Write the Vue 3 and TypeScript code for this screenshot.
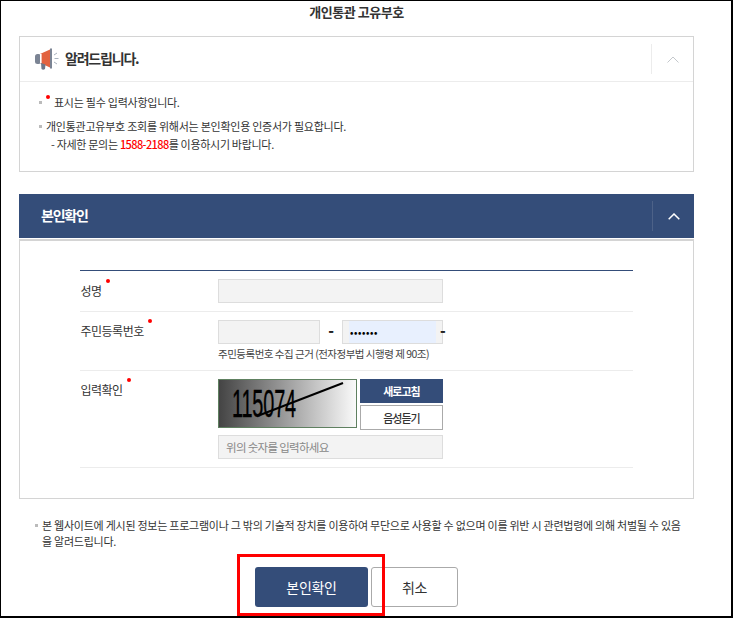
<script setup lang="ts">
const bullets = [
  { id: 1, text: '개인통관고유부호 조회를 위해서는 본인확인용 인증서가 필요합니다.' },
]
</script>

<template>
  <div class="page">
    <h1 class="page-title">개인통관 고유부호</h1>

    <section class="notice">
      <div class="notice-head">
        <div class="notice-title">
          <svg class="horn" viewBox="0 0 24 22" width="24" height="22">
            <rect x="0" y="6" width="6" height="10" rx="2.5" fill="#7b8494" />
            <path d="M5 6 L15 1.5 V19.5 L5 15 Z" fill="#e2623f" />
            <rect x="5" y="6" width="1.6" height="9" fill="#fff" />
            <path d="M15 0.5 L17 0.5 V20.5 L15 20.5 Z" fill="#7b8494" />
            <path d="M6 15 L10.5 16.5 L10 21 Q8 22.5 6.5 21 Z" fill="#6c7688" />
            <path d="M19 7 L22 5 M19.5 10.5 L23.5 10.5 M19 14 L22 16" stroke="#a9b2bd" stroke-width="1" fill="none" />
          </svg>
          <span>알려드립니다.</span>
        </div>
        <div class="toggle">
          <svg viewBox="0 0 12 7" width="12" height="7"><path d="M0.5 6.5 L6 1 L11.5 6.5" fill="none" stroke="#c4c8cc" stroke-width="1" /></svg>
        </div>
      </div>
      <div class="notice-body">
        <p class="bullet first"><i class="dot"></i><span class="after-dot">표시는 필수 입력사항입니다.</span></p>
        <p v-for="b in bullets" :key="b.id" class="bullet">{{ b.text }}</p>
        <p class="sub">- 자세한 문의는 <strong>1588-2188</strong>를 이용하시기 바랍니다.</p>
      </div>
    </section>

    <section class="verify">
      <div class="verify-head">
        <span class="verify-title">본인확인</span>
        <div class="toggle dark">
          <svg viewBox="0 0 12 7" width="12" height="7"><path d="M0.7 6.3 L6 1 L11.3 6.3" fill="none" stroke="#fff" stroke-width="1.5" /></svg>
        </div>
      </div>
      <div class="verify-body">
        <div class="form">
          <div class="row row-name">
            <label>성명<i class="dot"></i></label>
            <div class="field"><input class="input wide" type="text" /></div>
          </div>
          <div class="row row-rrn">
            <label>주민등록번호<i class="dot"></i></label>
            <div class="field">
              <div class="rrn">
                <input class="input part" type="text" />
                <b class="dash">-</b>
                <input class="input part secret" type="text" value="•••••••" />
                <b class="tail">-</b>
              </div>
              <p class="hint">주민등록번호 수집 근거 (전자정부법 시행령 제 90조)</p>
            </div>
          </div>
          <div class="row row-captcha">
            <label>입력확인<i class="dot"></i></label>
            <div class="field">
              <div class="captcha">
                <svg class="captcha-img" viewBox="0 0 137 47" width="139" height="49">
                  <defs>
                    <linearGradient id="cg" x1="0" x2="1" y1="0" y2="0">
                      <stop offset="0" stop-color="#444" />
                      <stop offset="1" stop-color="#fafafa" />
                    </linearGradient>
                  </defs>
                  <rect width="137" height="47" fill="url(#cg)" />
                  <text x="13" y="37" class="captcha-text" textLength="64" lengthAdjust="spacingAndGlyphs">115074</text>
                  <path d="M41 35 L124 3" stroke="#000" stroke-width="2" />
                </svg>
                <div class="captcha-btns">
                  <button class="btn-refresh" type="button">새로고침</button>
                  <button class="btn-audio" type="button">음성듣기</button>
                </div>
              </div>
              <input class="input wide code" type="text" placeholder="위의 숫자를 입력하세요" />
            </div>
          </div>
        </div>
      </div>
    </section>

    <p class="legal">본 웹사이트에 게시된 정보는 프로그램이나 그 밖의 기술적 장치를 이용하여 무단으로 사용할 수 없으며 이를 위반 시 관련법령에 의해 처벌될 수 있음<br />을 알려드립니다.</p>

    <div class="actions">
      <button class="btn primary" type="button">본인확인</button>
      <button class="btn ghost" type="button">취소</button>
      <div class="highlight"></div>
    </div>
  </div>
</template>

<style scoped>
.page {
  box-sizing: border-box;
  width: 733px;
  height: 618px;
  border: 1px solid #000;
  border-width: 1px 2px 2px 1px;
  padding: 0 37px 0 18px;
  overflow: hidden;
  font-family: "Noto Sans CJK KR", "Noto Sans", sans-serif;
  letter-spacing: -0.25px;
  color: #333;
  background: #fff;
}
.page-title {
  margin: 0;
  height: 35px;
  padding-top: 1px;
  box-sizing: border-box;
  font-size: 13px;
  line-height: 19px;
  font-weight: 700;
  letter-spacing: -0.45px;
  text-align: center;
  color: #333;
}
.notice {
  box-sizing: border-box;
  height: 136px;
  border: 1px solid #d4d4d4;
}
.notice-head {
  height: 45px;
  box-sizing: border-box;
  border-bottom: 1px solid #ececec;
  display: flex;
  justify-content: space-between;
  align-items: center;
}
.notice-title {
  display: flex;
  align-items: center;
  gap: 6px;
  padding-left: 15px;
  font-size: 14px;
  font-weight: 700;
  letter-spacing: -1.2px;
  color: #333;
}
.notice-title span { margin-top: -2px; }
.horn { display: block; }
.toggle {
  width: 41px;
  height: 30px;
  border-left: 1px solid #ececec;
  display: flex;
  align-items: center;
  justify-content: center;
}
.toggle.dark { border-left-color: #4d6288; }
.notice-body { padding: 11px 0 0 18px; font-size: 11px; line-height: 18px; }
.bullet {
  margin: 0;
  position: relative;
  padding-left: 8px;
}
.bullet::before {
  content: "";
  position: absolute;
  left: 1px;
  top: 8px;
  width: 3px;
  height: 3px;
  background: #bbb;
}
.bullet.first { padding-left: 6px; margin-bottom: 6px; }
.after-dot { margin-left: 4px; }
.sub { margin: 0; padding-left: 13px; letter-spacing: -0.3px; }
.sub strong { font-weight: 500; color: #f00; letter-spacing: -0.6px; }
.dot {
  display: inline-block;
  width: 4px;
  height: 4px;
  margin-left: 2px;
  border-radius: 50%;
  background: #f00;
  vertical-align: 8px;
}
.row label .dot {
  position: relative;
  top: -5px;
  margin-left: 4px;
}
.verify { margin-top: 22px; }
.verify-head {
  height: 44px;
  background: #344d79;
  color: #fff;
  display: flex;
  align-items: center;
  justify-content: space-between;
  padding-left: 22px;
  font-size: 14px;
  font-weight: 700;
  letter-spacing: -1.2px;
}
.verify-title { margin-top: -2px; }
.verify-body {
  box-sizing: border-box;
  margin-top: 1px;
  height: 260px;
  border: 1px solid #d4d4d4;
  border-top-width: 2px;
  padding: 29px 60px 0 60px;
}
.form { border-top: 1px solid #344d79; }
.row {
  display: flex;
  box-sizing: border-box;
  border-bottom: 1px solid #ececec;
  padding-top: 8px;
}
.row-name { height: 41px; }
.row-rrn { height: 59px; }
.row-captcha { height: 97px; }
.row label {
  width: 138px;
  flex: none;
  box-sizing: border-box;
  padding-left: 0.5px;
  font-size: 12px;
  line-height: 24px;
  letter-spacing: -0.5px;
  color: #333;
}
.row-rrn label,
.row-captcha label { line-height: 22px; }
.field { width: 225px; }
.input {
  display: block;
  box-sizing: border-box;
  height: 24px;
  margin: 0;
  padding: 0 7px;
  border: 1px solid #ddd;
  background: #f3f3f3;
  font-family: inherit;
  font-size: 11.5px;
  letter-spacing: -0.7px;
  border-radius: 0;
  outline: none;
}
.input.wide { width: 225px; }
.rrn { display: flex; align-items: center; }
.input.part { width: 102px; }
.input.secret {
  width: 101px;
  background: linear-gradient(#e8f0fe, #e8f0fe) no-repeat 6px 0 / 87px 100%, #f3f3f3;
  color: #000;
  font-size: 9px;
  font-weight: 700;
  letter-spacing: 0.6px;
}
.dash { width: 22px; margin-top: -5px; text-align: center; font-size: 15px; font-weight: 900; color: #222; }
.tail { width: 0; margin: -5px 0 0 -3px; font-size: 15px; font-weight: 900; color: #222; }
.hint { margin: 3px 0 0; font-size: 10.5px; line-height: 14px; letter-spacing: -0.5px; color: #444; }
.captcha { display: flex; justify-content: space-between; }
.captcha-img {
  display: block;
  box-sizing: border-box;
  border: 1px solid #5f8060;
}
.captcha-text {
  font-family: "Liberation Sans", sans-serif;
  font-size: 39px;
  fill: #000;
  stroke: #000;
  stroke-width: 0.4;
}
.captcha-btns { width: 83px; display: flex; flex-direction: column; gap: 2px; }
.captcha-btns button {
  box-sizing: border-box;
  height: 24px;
  padding: 0;
  font-family: inherit;
  font-size: 11px;
  letter-spacing: -1px;
  border-radius: 0;
}
.btn-refresh { border: none; background: #344d79; color: #fff; font-weight: 700; }
.btn-audio { height: 25px !important; border: 1px solid #aaa; background: #fff; color: #333; font-weight: 500; }
.code { margin-top: 5px; }
.code::placeholder { color: #888; opacity: 1; }
.legal {
  margin: 18px 0 0;
  padding-left: 23px;
  position: relative;
  font-size: 11px;
  line-height: 16px;
  letter-spacing: -0.25px;
}
.legal::before {
  content: "";
  position: absolute;
  left: 16px;
  top: 7px;
  width: 3px;
  height: 3px;
  background: #bbb;
}
.actions {
  position: relative;
  display: flex;
  justify-content: center;
  gap: 3px;
  margin-top: 18px;
}
.btn {
  box-sizing: border-box;
  height: 40px;
  padding: 0;
  font-family: inherit;
  font-size: 14px;
  letter-spacing: -0.3px;
  border-radius: 3px;
}
.primary { width: 113px; border: none; background: #344d79; color: #fff; }
.ghost { width: 87px; border: 1px solid #aaa; background: #fff; color: #333; }
.highlight {
  position: absolute;
  left: 218px;
  top: -13px;
  width: 148px;
  height: 62px;
  box-sizing: border-box;
  border: 3px solid #f00;
}
</style>
